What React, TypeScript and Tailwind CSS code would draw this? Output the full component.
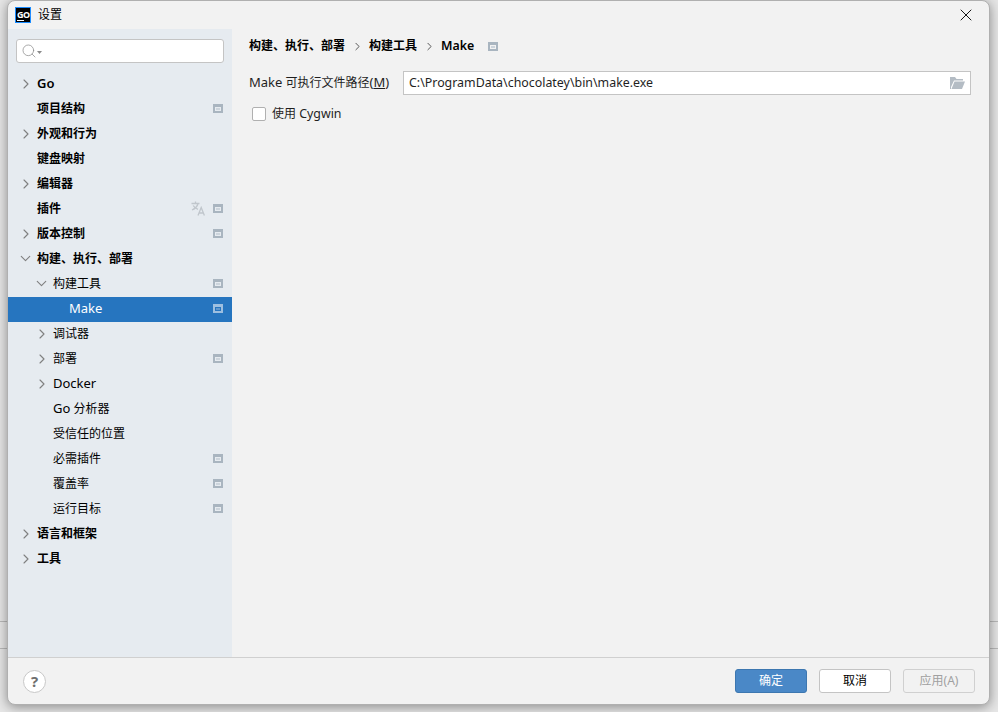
import React from 'react';
import { ChevronRight, ChevronDown, X, Search } from 'lucide-react';

const font = { fontFamily: '"Noto Sans", "Noto Sans CJK SC", sans-serif' };

type Row = {
  label: string;
  depth: number;
  arrow?: 'right' | 'down';
  bold?: boolean;
  badge?: boolean;
  translate?: boolean;
  selected?: boolean;
};

const rows: Row[] = [
  { label: 'Go', depth: 0, arrow: 'right', bold: true },
  { label: '项目结构', depth: 0, bold: true, badge: true },
  { label: '外观和行为', depth: 0, arrow: 'right', bold: true },
  { label: '键盘映射', depth: 0, bold: true },
  { label: '编辑器', depth: 0, arrow: 'right', bold: true },
  { label: '插件', depth: 0, bold: true, badge: true, translate: true },
  { label: '版本控制', depth: 0, arrow: 'right', bold: true, badge: true },
  { label: '构建、执行、部署', depth: 0, arrow: 'down', bold: true },
  { label: '构建工具', depth: 1, arrow: 'down', badge: true },
  { label: 'Make', depth: 2, badge: true, selected: true },
  { label: '调试器', depth: 1, arrow: 'right' },
  { label: '部署', depth: 1, arrow: 'right', badge: true },
  { label: 'Docker', depth: 1, arrow: 'right' },
  { label: 'Go 分析器', depth: 1 },
  { label: '受信任的位置', depth: 1 },
  { label: '必需插件', depth: 1, badge: true },
  { label: '覆盖率', depth: 1, badge: true },
  { label: '运行目标', depth: 1, badge: true },
  { label: '语言和框架', depth: 0, arrow: 'right', bold: true },
  { label: '工具', depth: 0, arrow: 'right', bold: true },
];

// latin runs are a bit larger than the cjk ones in the reference
const Mixed = ({ text }: { text: string }) => (
  <>
    {text.split(/([A-Za-z]+)/).map((part, i) =>
      /[A-Za-z]/.test(part) ? (
        <span key={i} className="text-[13px]">
          {part}
        </span>
      ) : (
        <span key={i}>{part}</span>
      ),
    )}
  </>
);

const Badge = ({ light }: { light?: boolean }) => (
  <svg width="10" height="9" viewBox="0 0 10 9" className="shrink-0">
    <path
      fillRule="evenodd"
      d="M0 0h10v9H0zM2 3v4h6V3z"
      fill={light ? '#9dbfe0' : '#a9b5c0'}
    />
    <rect x="3" y="4" width="4" height="2" fill={light ? '#5f97ce' : '#ccd4dc'} />
  </svg>
);

const TreeRow = ({ row }: { row: Row }) => {
  const pad = row.depth === 0 ? 'pl-[12px]' : row.depth === 1 ? 'pl-[28px]' : 'pl-[44px]';
  return (
    <div
      className={`flex items-center h-[25px] pb-[2px] pr-[9px] text-[12px] ${pad} ${
        row.selected ? 'bg-[#2675bf] text-white' : 'text-black'
      } ${row.bold ? 'font-semibold' : ''}`}
    >
      <span className="w-[11px] h-[16px] shrink-0 flex items-center justify-center">
        {row.arrow === 'right' && <ChevronRight size={16} strokeWidth={1.7} className="shrink-0 text-[#808080]" />}
        {row.arrow === 'down' && <ChevronDown size={17} strokeWidth={1.6} className="shrink-0 text-[#808080]" />}
      </span>
      <span className="ml-[6px] flex-1">
        <Mixed text={row.label} />
      </span>
      {row.translate && (
        <span className="mr-[7px] flex items-center">
          <svg width="15" height="15" viewBox="0 0 15 15" fill="none" stroke="#c0c6cc" strokeWidth="1.3">
            <path d="M0.5 2.5h8M4.5 0.5v2M7 2.5c-.6 2.8-2.6 5-6 6.5M2.2 4.5c1 1.9 2.8 3.1 4.8 3.8" />
            <path d="M7 14.5l3.2-8 3.2 8M8.2 12h4" />
          </svg>
        </span>
      )}
      {row.badge && <Badge light={row.selected} />}
    </div>
  );
};

export default function App() {
  return (
    <div className="relative w-[998px] h-[712px] bg-[#e6e6e6] overflow-hidden" style={font}>
      {/* editor window behind the dialog */}
      <div className="absolute left-0 right-0 top-[621px] h-px bg-[#b9b9b9]" />
      <div className="absolute left-0 right-0 top-[648px] h-px bg-[#b9b9b9]" />

      <div className="relative ml-[7px] w-[983px] h-[705px] bg-[#f2f2f2] rounded-[8px] border border-[#b0b0b0] shadow-[0_2px_12px_rgba(0,0,0,0.4)] flex flex-col overflow-hidden">
        {/* title bar */}
        <div className="h-[28px] shrink-0 flex items-center pl-[7px] pr-[13px]">
          <div className="w-[16px] h-[16px] bg-black border border-[#1a8cff] flex flex-col justify-center pl-px shrink-0">
            <span className="text-white text-[9px] leading-[9px] font-bold tracking-[-0.5px]">GO</span>
            <span className="w-[7px] h-px bg-white mt-px" />
          </div>
          <span className="ml-[7px] text-[12px] text-black flex-1">设置</span>
          <X size={20} strokeWidth={1.1} className="text-black" />
        </div>

        <div className="flex-1 flex min-h-0">
          {/* sidebar */}
          <div className="w-[224px] shrink-0 bg-[#e6ebf0] flex flex-col">
            <div className="px-[8px] pt-[10px] pb-[9px]">
              <div className="h-[24px] bg-white border border-[#c4c4c4] rounded-[3px] flex items-center pl-[4px]">
                <Search size={16} strokeWidth={1.1} className="text-[#8a8a8a]" />
                <svg width="5" height="3" viewBox="0 0 5 3" className="mt-[2px]">
                  <path d="M0 0h5L2.5 3z" fill="#8a8a8a" />
                </svg>
              </div>
            </div>
            <div>
              {rows.map((r) => (
                <TreeRow key={r.label} row={r} />
              ))}
            </div>
          </div>

          {/* content */}
          <div className="flex-1 min-w-0 pl-[17px] pr-[18px] pt-[7px] text-[12px]">
            <div className="flex items-center h-[20px] font-semibold text-black">
              <span>构建、执行、部署</span>
              <ChevronRight size={13} strokeWidth={1.8} className="ml-[6px] mr-[5px] text-[#555]" />
              <span>构建工具</span>
              <ChevronRight size={13} strokeWidth={1.8} className="ml-[6px] mr-[5px] text-[#555]" />
              <span className="text-[12.4px]">Make</span>
              <span className="ml-[14px] flex">
                <Badge />
              </span>
            </div>
            <div className="flex items-center mt-[15px] text-[#1f1f1f]">
              <span className="w-[154px] shrink-0">
                <span className="text-[13px]">Make</span> 可执行文件路径
                <span className="text-[13px]">
                  (<span className="underline">M</span>)
                </span>
              </span>
              <div className="flex-1 h-[24px] bg-white border border-[#c4c4c4] flex items-center px-[5px]">
                <span className="flex-1 text-[12.4px]">C:\ProgramData\chocolatey\bin\make.exe</span>
                <svg width="15" height="12" viewBox="0 0 15 12">
                  <path d="M0 0h5l1.5 2H13v1.5H4L1 10V12H0z" fill="#b4bcc4" />
                  <path d="M4.5 4.5H15L12 12H1.5z" fill="#b4bcc4" />
                </svg>
              </div>
            </div>
            <div className="flex items-center mt-[10px] ml-[3px] text-[#1f1f1f]">
              <span className="w-[14px] h-[14px] bg-white border border-[#b0b0b0] rounded-[2px] shrink-0" />
              <span className="ml-[6px]">
                使用 <span className="text-[12.4px]">Cygwin</span>
              </span>
            </div>
          </div>
        </div>

        {/* footer */}
        <div className="h-[47px] shrink-0 border-t border-[#d0d0d0] flex items-center pl-[15px] pr-[14px] text-[12px]">
          <div className="w-[23px] h-[23px] rounded-full bg-white border border-[#c8c8c8] flex items-center justify-center text-[15px] font-bold text-[#6e6e6e]">
            ?
          </div>
          <div className="flex-1" />
          <div className="w-[72px] h-[24px] rounded-[3px] bg-[#4a88c7] border border-[#3d77b0] text-white flex items-center justify-center">
            确定
          </div>
          <div className="ml-[12px] w-[72px] h-[24px] rounded-[3px] bg-white border border-[#c4c4c4] text-black flex items-center justify-center">
            取消
          </div>
          <div className="ml-[12px] w-[72px] h-[24px] rounded-[3px] border border-[#d0d0d0] text-[#a0a0a0] flex items-center justify-center">
            应用(A)
          </div>
        </div>
      </div>
    </div>
  );
}
